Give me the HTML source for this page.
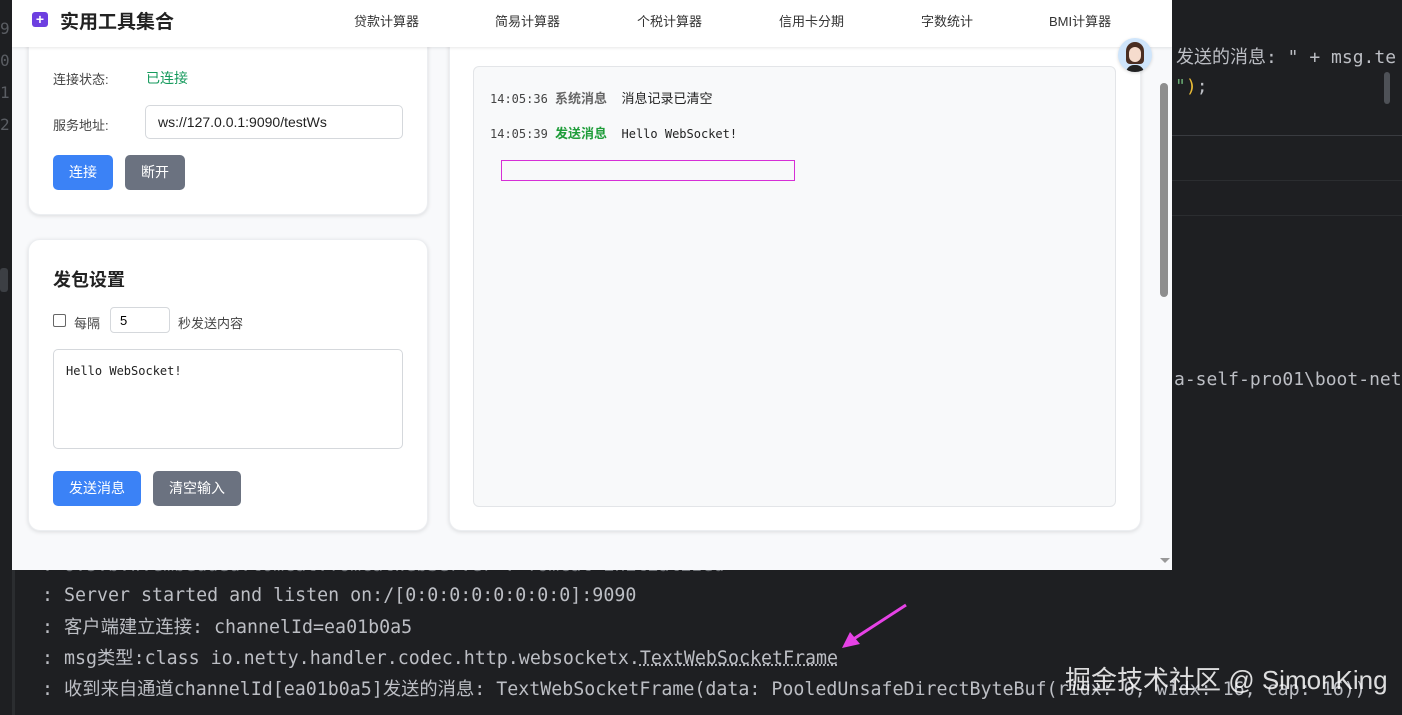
<!DOCTYPE html>
<html><head><meta charset="utf-8"><style>
*{margin:0;padding:0;box-sizing:border-box}
body{width:1402px;height:715px;background:#1e1f22;position:relative;overflow:hidden;font-family:"Liberation Sans","Noto Sans CJK SC",sans-serif}
.abs{position:absolute}
.mono{font-family:"DejaVu Sans Mono","Noto Sans CJK SC",monospace;color:#bcbec4;font-size:17px;white-space:nowrap}
.con{font-size:18.3px;line-height:22px}
.win{left:12px;top:0;width:1160px;height:570px;background:#f8f9fb;overflow:hidden}
.hdr{left:0;top:0;width:1160px;height:47px;background:#fff;box-shadow:0 1px 3px rgba(0,0,0,.1)}
.card{background:#fff;border-radius:12px;box-shadow:0 1px 4px rgba(0,0,0,.12);border:1px solid #eceef1}
.nav{font-size:13px;color:#333;top:11px}
.btn{border-radius:5px;color:#fff;font-size:14px;text-align:center}
.lbl{font-size:13px;color:#444}
.log{font-family:"DejaVu Sans Mono","Liberation Mono","Noto Sans CJK SC",monospace;font-size:12px;color:#222;white-space:nowrap}
</style></head><body>
<div class="abs" style="left:1172px;top:135px;width:230px;height:1px;background:#393b40"></div>
<div class="abs" style="left:1172px;top:180px;width:230px;height:1px;background:#2b2d30"></div>
<div class="abs" style="left:1172px;top:215px;width:230px;height:1px;background:#2b2d30"></div>
<div class="abs mono" style="left:1176px;top:43px;font-size:18px">发送的消息: " + msg.te</div>
<div class="abs mono" style="left:1175px;top:76px;font-size:18px"><span style="color:#6aab73">"</span><span style="color:#e8ba36">)</span>;</div>
<div class="abs" style="left:1384px;top:72px;width:6px;height:32px;background:#4e5157;border-radius:3px"></div>
<div class="abs mono" style="left:1174px;top:369px;font-size:18px">a-self-pro01\boot-net</div>
<div class="abs mono" style="left:0;top:13px;color:#5a5d63;font-size:16px;line-height:32px">9<br>0<br>1<br>2</div>
<div class="abs" style="left:0;top:268px;width:8px;height:24px;background:#3c3f44;border-radius:3px"></div>
<div class="abs" style="left:12px;top:570px;width:3px;height:145px;background:#2b2d30"></div>
<div class="abs mono con" style="left:42px;top:555px;color:#6f7277">: o.s.b.w.embedded.tomcat.TomcatWebServer : Tomcat initialized</div>
<div class="abs mono con" style="left:42px;top:585px">: Server started and listen on:/[0:0:0:0:0:0:0:0]:9090</div>
<div class="abs mono con" style="left:42px;top:617px">: 客户端建立连接: channelId=ea01b0a5</div>
<div class="abs mono con" style="left:42px;top:648px">: msg类型:class io.netty.handler.codec.http.websocketx.<span style="text-decoration:underline dotted">TextWebSocketFrame</span></div>
<div class="abs mono con" style="left:42px;top:679px">: 收到来自通道channelId[ea01b0a5]发送的消息: TextWebSocketFrame(data: PooledUnsafeDirectByteBuf(ridx: 0, widx: 16, cap: 16))</div>
<svg class="abs" style="left:838px;top:602px" width="72" height="50"><path d="M68 3 L14 38" stroke="#e642e6" stroke-width="3"/><path d="M4 46 L12 30 L22 42 Z" fill="#e642e6"/></svg>
<div class="abs" style="left:1065px;top:660px;font-size:26px;color:rgba(255,255,255,.85);white-space:nowrap">掘金技术社区 @ SimonKing</div>

<div class="abs win">
 <div class="abs card" style="left:16px;top:30px;width:400px;height:185px"></div>
 <div class="abs lbl" style="left:41px;top:69px">连接状态:</div>
 <div class="abs" style="left:134px;top:68px;font-size:14px;color:#159a5c">已连接</div>
 <div class="abs lbl" style="left:41px;top:115px">服务地址:</div>
 <div class="abs" style="left:133px;top:105px;width:258px;height:34px;border:1px solid #d5d8dc;border-radius:5px;background:#fff;font-size:14px;color:#222;padding:8px 12px">ws://127.0.0.1:9090/testWs</div>
 <div class="abs btn" style="left:41px;top:155px;width:60px;height:35px;background:#3b82f6;line-height:35px">连接</div>
 <div class="abs btn" style="left:113px;top:155px;width:60px;height:35px;background:#6b7280;line-height:35px">断开</div>
 <div class="abs card" style="left:16px;top:239px;width:400px;height:292px"></div>
 <div class="abs" style="left:41px;top:266px;font-size:18px;font-weight:bold;color:#222">发包设置</div>
 <div class="abs" style="left:41px;top:314px;width:13px;height:13px;border:1px solid #666;border-radius:2px;background:#fff"></div>
 <div class="abs lbl" style="left:62px;top:313px">每隔</div>
 <div class="abs" style="left:98px;top:307px;width:60px;height:26px;border:1px solid #d5d8dc;border-radius:4px;background:#fff;font-size:13px;padding:5px 9px">5</div>
 <div class="abs lbl" style="left:166px;top:313px">秒发送内容</div>
 <div class="abs" style="left:41px;top:349px;width:350px;height:100px;border:1px solid #d5d8dc;border-radius:5px;background:#fff;padding:12px 12px"><span class="log">Hello WebSocket!</span></div>
 <div class="abs btn" style="left:41px;top:471px;width:88px;height:35px;background:#3b82f6;line-height:35px">发送消息</div>
 <div class="abs btn" style="left:141px;top:471px;width:88px;height:35px;background:#6b7280;line-height:35px">清空输入</div>
 <div class="abs card" style="left:437px;top:30px;width:692px;height:501px"></div>
 <div class="abs hdr" style="z-index:2">
  <div class="abs" style="left:20px;top:12px;width:16px;height:15px;background:#6d3fe0;border-radius:3px;color:#fff;font-size:14px;line-height:14px;text-align:center;font-weight:bold">+</div>
  <div class="abs" style="left:48px;top:7px;font-size:19px;font-weight:bold;color:#222">实用工具集合</div>
  <div class="abs nav" style="left:342px">贷款计算器</div>
  <div class="abs nav" style="left:483px">简易计算器</div>
  <div class="abs nav" style="left:625px">个税计算器</div>
  <div class="abs nav" style="left:767px">信用卡分期</div>
  <div class="abs nav" style="left:909px">字数统计</div>
  <div class="abs nav" style="left:1037px">BMI计算器</div>
 </div>
 <div class="abs" style="left:461px;top:66px;width:643px;height:441px;background:#f8f9fa;border:1px solid #e3e5e8;border-radius:6px"></div>
 <div class="abs log" style="left:478px;top:88px"><span style="color:#444">14:05:36</span> <b style="color:#666;font-family:'Noto Sans CJK SC',sans-serif;font-size:13px">系统消息</b>&nbsp;&nbsp;<span style="font-family:'Noto Sans CJK SC',sans-serif;font-size:13px">消息记录已清空</span></div>
 <div class="abs log" style="left:478px;top:123px"><span style="color:#444">14:05:39</span> <b style="color:#1f9d3a;font-family:'Noto Sans CJK SC',sans-serif;font-size:13px">发送消息</b>&nbsp;&nbsp;Hello WebSocket!</div>
 <div class="abs" style="left:489px;top:160px;width:294px;height:21px;border:1px solid #d62fd6"></div>
 <div class="abs" style="left:1106px;top:38px;width:34px;height:34px;border-radius:50%;background:#cfe5fb;z-index:3;overflow:hidden;box-shadow:0 1px 3px rgba(0,0,0,.15)">
  <div class="abs" style="left:8px;top:4px;width:18px;height:22px;background:#4a2e22;border-radius:9px 9px 4px 4px"></div>
  <div class="abs" style="left:11px;top:9px;width:12px;height:15px;background:#f6dccd;border-radius:6px"></div>
  <div class="abs" style="left:8px;top:27px;width:18px;height:8px;background:#222;border-radius:8px 8px 0 0"></div>
 </div>
 <div class="abs" style="left:1148px;top:83px;width:8px;height:214px;background:#8e8e8e;border-radius:4px"></div>
 <div class="abs" style="left:1148px;top:558px;width:0;height:0;border-left:5px solid transparent;border-right:5px solid transparent;border-top:5px solid #999"></div>
</div>
</body></html>
